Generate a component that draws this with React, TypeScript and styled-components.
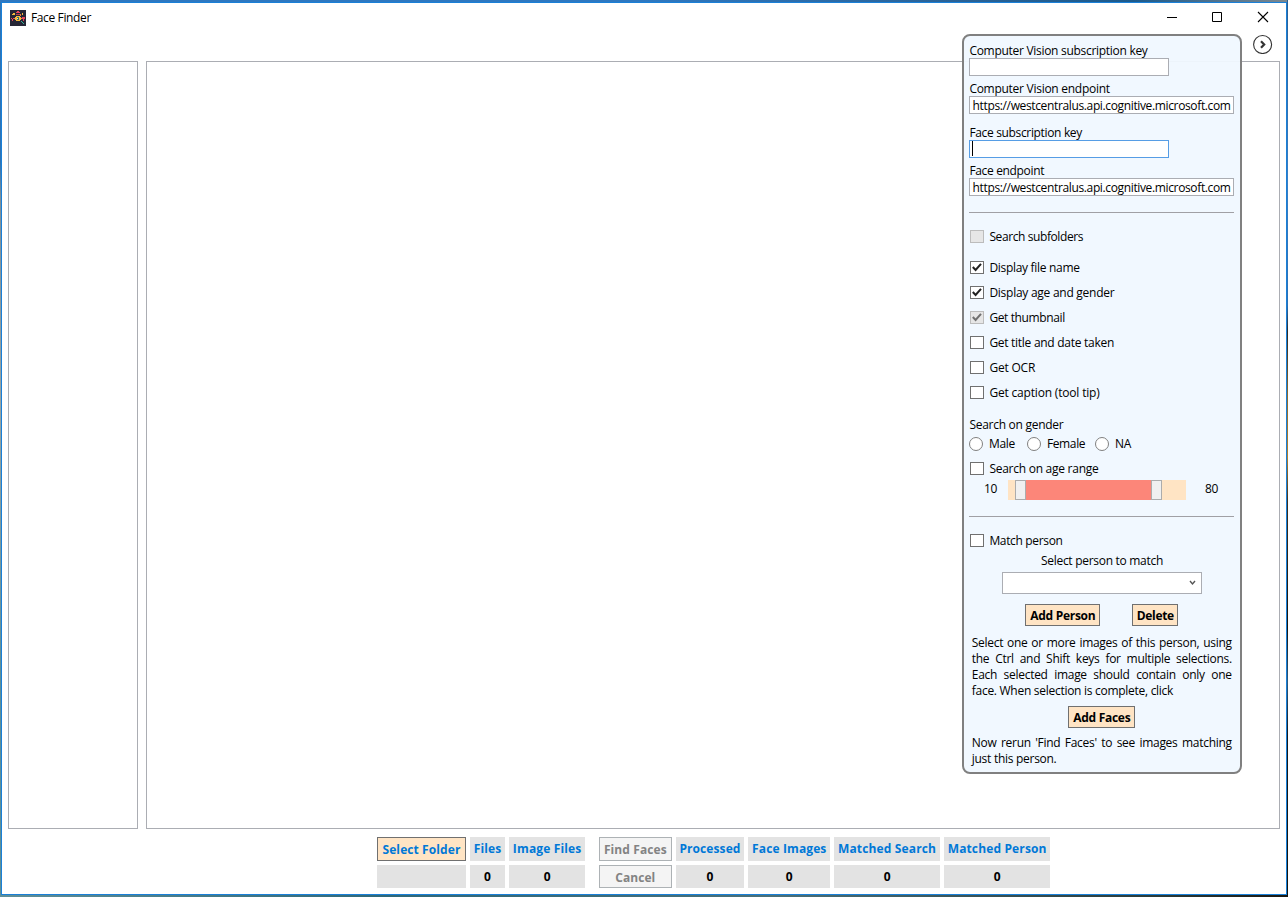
import React from 'react';
import styled, { createGlobalStyle, css } from 'styled-components';

const GlobalStyle = createGlobalStyle`
  * { box-sizing: border-box; }
  body { margin: 0; overflow: hidden; }
  body, button, input {
    font-family: 'Open Sans', 'Noto Sans', sans-serif;
    font-size: 12px;
    line-height: 16px;
    color: #000;
  }
`;

const Desktop = styled.div`
  width: 1288px;
  height: 897px;
  padding: 2px 1px;
  background:
    linear-gradient(180deg, #2a5f94 0%, #3a7fc4 20%, #2a70b5 34%, #2a2a28 37%, #8a6a30 44%, #b08030 51%, #3a2f20 56%, #16140f 70%, #2a5a80 76%, #14181c 82%, #14140f 100%) right / 1px 100% no-repeat,
    linear-gradient(90deg, #5f8f98 0%, #2f6878 30%, #4a7078 60%, #2a3a38 90%, #1a1812 100%) bottom / 100% 2px no-repeat,
    linear-gradient(90deg, #2f78c0 0%, #2f78c0 50%, #2a6296 74%, #1c5a8c 88%, #7c8890 100%) top / 100% 2px no-repeat,
    linear-gradient(180deg, #2f74b5 0%, #2f74b5 18%, #7f8f98 22%, #9aa5a4 45%, #5f8f98 75%, #5f9098 100%);
`;

const Window = styled.div`
  position: relative;
  display: flex;
  flex-direction: column;
  width: 1286px;
  height: 893px;
  border: 1px solid #1a80d8;
  background: #fff;
`;

const TitleBar = styled.header`
  display: flex;
  align-items: center;
  height: 29px;
  padding: 0 9px 0 8px;
`;

const Title = styled.span<{ $ls?: number }>`
  flex: 1;
  margin-left: 5px;
  letter-spacing: ${(p) => p.$ls ?? 0}px;
`;

const WindowButtons = styled.div`
  display: flex;
  align-items: center;
  gap: 34px;
  margin: -2px 8px 0 0;
`;

const Toolbar = styled.div`
  display: flex;
  justify-content: flex-end;
  height: 29px;
  padding: 2px 13px 0 0;
`;

const Panes = styled.main`
  display: flex;
  gap: 8px;
  height: 768px;
  padding: 0 6px;
`;

const Pane = styled.section<{ $width?: number }>`
  ${(p) => (p.$width ? css`width: ${p.$width}px;` : css`flex: 1;`)}
  border: 1px solid #abadb3;
`;

const StatusGrid = styled.footer`
  display: grid;
  grid-template-columns: 89px 35px 76.3px 5.7px 72.7px 68.6px 82px 105.6px 106.6px;
  grid-template-rows: 24px 23px;
  gap: 4px;
  margin: 8px 0 0 375px;
`;

const StatusCell = styled.div<{ $head?: boolean; $ls?: number; $blank?: boolean }>`
  display: flex;
  justify-content: center;
  padding-top: 4px;
  font-weight: 700;
  white-space: nowrap;
  letter-spacing: ${(p) => p.$ls ?? 0}px;
  color: ${(p) => (p.$head ? '#0078d7' : '#000')};
  background: ${(p) => (p.$blank ? 'transparent' : '#e3e3e3')};
`;

const Button = styled.button<{ $w?: number; $blue?: boolean; $tall?: boolean; $ls?: number }>`
  display: flex;
  justify-content: center;
  width: ${(p) => (p.$w ? `${p.$w}px` : 'auto')};
  height: ${(p) => (p.$tall ? 'auto' : '22px')};
  padding: ${(p) => (p.$tall ? 4 : 3)}px 0 0;
  border: 1px solid #707070;
  border-radius: 0;
  background: #ffe4c4;
  color: ${(p) => (p.$blue ? '#0078d7' : '#000')};
  font-weight: 700;
  white-space: nowrap;
  letter-spacing: ${(p) => p.$ls ?? 0}px;
  &:disabled {
    border-color: #adb2b5;
    background: #f4f4f4;
    color: #838383;
  }
`;

const Settings = styled.aside`
  position: absolute;
  left: 959.6px;
  top: 31px;
  display: flex;
  flex-direction: column;
  width: 280px;
  height: 740px;
  padding: 6px 5px 0 5.4px;
  border: 2px solid #808080;
  border-radius: 8px;
  background: rgba(240, 248, 255, 0.95);
`;

const Field = styled.label<{ $gap?: number }>`
  display: block;
  height: 34px;
  margin-bottom: ${(p) => p.$gap ?? 4}px;
`;

const Caption = styled.span<{ $ls?: number }>`
  display: block;
  height: 16px;
  padding: 1px 0 0 0.4px;
  white-space: nowrap;
  letter-spacing: ${(p) => p.$ls ?? -0.27}px;
`;

const TextBox = styled.div<{ $w: number; $focus?: boolean; $ls?: number }>`
  display: flex;
  width: ${(p) => p.$w}px;
  height: 18px;
  padding: 1px 0 0 2.6px;
  border: 1px solid ${(p) => (p.$focus ? '#569de5' : '#abadb3')};
  background: #fff;
  white-space: nowrap;
  letter-spacing: ${(p) => p.$ls ?? 0}px;
`;

const Caret = styled.i`
  width: 1px;
  height: 15px;
  margin: -1px 0 0 -1px;
  background: #000;
`;

const Divider = styled.hr<{ $top: number; $bottom: number }>`
  width: 265px;
  height: 1px;
  margin: ${(p) => p.$top}px 0 ${(p) => p.$bottom}px;
  border: 0;
  background: #a0a0a5;
`;

const CheckRow = styled.label<{ $gap?: number }>`
  display: flex;
  height: 16px;
  margin-bottom: ${(p) => p.$gap ?? 9}px;
  padding-left: 1px;
`;

const Box = styled.span<{ $disabled?: boolean }>`
  display: flex;
  width: 14px;
  height: 13px;
  margin: 2px 5px 0 0;
  border: 1px solid ${(p) => (p.$disabled ? '#bcbcbc' : '#707070')};
  background: ${(p) => (p.$disabled ? '#e6e6e6' : '#fff')};
`;

const RadioRow = styled.div`
  display: flex;
  height: 16px;
  margin: 3px 0 9px;
  padding-left: 1px;
`;

const Radio = styled.label<{ $w: number }>`
  display: flex;
  gap: 5px;
  width: ${(p) => p.$w}px;
  &::before {
    content: '';
    flex: none;
    width: 12px;
    height: 12px;
    margin: 2px 0 0 -0.5px;
    border: 1px solid #808080;
    border-radius: 50%;
    background: #fff;
  }
`;

const AgeRow = styled.div`
  display: flex;
  height: 20px;
  padding-left: 15px;
`;

const AgeValue = styled.span<{ $w: number }>`
  width: ${(p) => p.$w}px;
  padding-top: 1px;
  letter-spacing: -0.4px;
`;

const Track = styled.div`
  display: flex;
  width: 178px;
  height: 20px;
  margin-right: 19px;
  padding-left: 7px;
  background: #ffe4c4;
`;

const Thumb = styled.span`
  width: 11px;
  border: 1px solid #acacac;
  background: #f0f0f0;
`;

const Span = styled.span`
  width: 125px;
  background: #fc8679;
`;

const Centered = styled.div<{ $top?: number; $gap?: number }>`
  display: flex;
  justify-content: center;
  gap: ${(p) => p.$gap ?? 0}px;
  margin-top: ${(p) => p.$top ?? 0}px;
`;

const Select = styled.div`
  display: flex;
  align-items: center;
  justify-content: flex-end;
  width: 200px;
  height: 22px;
  padding-right: 5px;
  border: 1px solid #abadb3;
  background: #fff;
`;

const Help = styled.p<{ $top: number }>`
  width: 260px;
  margin: ${(p) => p.$top}px 0 0 2.8px;
`;

const HelpLine = styled.span<{ $last?: boolean }>`
  display: block;
  height: 16px;
  white-space: nowrap;
  text-align-last: ${(p) => (p.$last ? 'left' : 'justify')};
  letter-spacing: -0.28px;
`;

function AppIcon() {
  return (
    <svg width="16" height="16" viewBox="0 0 16 16" shapeRendering="crispEdges">
      <path fill="#262636" d="M0 0h16v16H0z" />
      <path fill="#e8455c" d="M6 2h4v1H6zM7 1h2v1H7zM1 8h1v1H1zM3 8h1v1H3zM2 9h1v2H2zM12 7h3v2h-1v2h-1V9h-1z" />
      <path fill="#f6b93b" d="M2 4h1V3h2v2H2zM5 7h1V6h4v1h1v3h-1v1H6v-1H5zM12 3h1v2h-1z" />
      <path fill="#ef7d3c" d="M10 4h1v2h-1zM4 8h1v1H4zM11 8h1v1h-1z" />
      <path fill="#b8404f" d="M6 4h4v1H6z" />
      <path fill="#2f6f75" d="M7 7h2v3H7z" />
      <path fill="#f7e6a0" d="M7 8h1v1H7z" />
      <path fill="#38b59a" d="M11 11h1v1h-1zM12 12h1v1h-1zM13 13h1v1h-1z" />
    </svg>
  );
}

function CheckBox({ text, checked, disabled, ls = -0.26, gap }: {
  text: string; checked?: boolean; disabled?: boolean; ls?: number; gap?: number;
}) {
  return (
    <CheckRow $gap={gap}>
      <Box $disabled={disabled}>
        {checked && (
          <svg width="12" height="11" viewBox="0 0 12 11">
            <path d="M1.8 5 4.6 8 10 1.8" fill="none" stroke={disabled ? '#707070' : '#212121'} strokeWidth="2" />
          </svg>
        )}
      </Box>
      <Caption $ls={ls}>{text}</Caption>
    </CheckRow>
  );
}

export default function App() {
  return (
    <Desktop>
      <GlobalStyle />
      <Window>
        <TitleBar>
          <AppIcon />
          <Title $ls={-0.37}>Face Finder</Title>
          <WindowButtons>
            <svg width="12" height="12" viewBox="0 0 12 12"><path d="M2 6.5h10" stroke="#000" /></svg>
            <svg width="12" height="12" viewBox="0 0 12 12"><path d="M1.5 1.5h9v9h-9z" fill="none" stroke="#000" /></svg>
            <svg width="12" height="12" viewBox="0 0 12 12"><path d="m1 1 10 10M11 1 1 11" stroke="#000" strokeWidth="1.1" /></svg>
          </WindowButtons>
        </TitleBar>
        <Toolbar>
          <svg width="20" height="20" viewBox="0 0 20 20">
            <circle cx="9.6" cy="10.5" r="9" fill="#fff" stroke="#333" strokeWidth="1.1" />
            <path d="m8 7.2 3.2 3.3L8 13.8" fill="none" stroke="#333" strokeWidth="2.2" />
          </svg>
        </Toolbar>
        <Panes>
          <Pane $width={130} />
          <Pane />
        </Panes>
        <StatusGrid>
          <Button $blue $tall $ls={0.1}>Select Folder</Button>
          <StatusCell $head $ls={0.1}>Files</StatusCell>
          <StatusCell $head $ls={0.15}>Image Files</StatusCell>
          <StatusCell $blank />
          <Button $tall disabled $ls={0.1}>Find Faces</Button>
          <StatusCell $head $ls={0.1}>Processed</StatusCell>
          <StatusCell $head $ls={0.12}>Face Images</StatusCell>
          <StatusCell $head $ls={0.14}>Matched Search</StatusCell>
          <StatusCell $head $ls={0.14}>Matched Person</StatusCell>
          <StatusCell />
          <StatusCell>0</StatusCell>
          <StatusCell>0</StatusCell>
          <StatusCell $blank />
          <Button $tall disabled $ls={0.05}>Cancel</Button>
          <StatusCell>0</StatusCell>
          <StatusCell>0</StatusCell>
          <StatusCell>0</StatusCell>
          <StatusCell>0</StatusCell>
        </StatusGrid>
        <Settings>
          <Field>
            <Caption $ls={-0.29}>Computer Vision subscription key</Caption>
            <TextBox $w={200} />
          </Field>
          <Field $gap={10}>
            <Caption>Computer Vision endpoint</Caption>
            <TextBox $w={265} $ls={-0.36}>https://westcentralus.api.cognitive.microsoft.com</TextBox>
          </Field>
          <Field>
            <Caption $ls={-0.34}>Face subscription key</Caption>
            <TextBox $w={200} $focus><Caret /></TextBox>
          </Field>
          <Field $gap={0}>
            <Caption $ls={-0.34}>Face endpoint</Caption>
            <TextBox $w={265} $ls={-0.36}>https://westcentralus.api.cognitive.microsoft.com</TextBox>
          </Field>
          <Divider $top={16} $bottom={15} />
          <CheckBox text="Search subfolders" disabled gap={15} ls={-0.4} />
          <CheckBox text="Display file name" checked ls={-0.3} />
          <CheckBox text="Display age and gender" checked />
          <CheckBox text="Get thumbnail" checked disabled ls={-0.38} />
          <CheckBox text="Get title and date taken" ls={-0.28} />
          <CheckBox text="Get OCR" ls={-0.2} />
          <CheckBox text="Get caption (tool tip)" gap={16} ls={-0.18} />
          <Caption>Search on gender</Caption>
          <RadioRow>
            <Radio $w={58}><Caption>Male</Caption></Radio>
            <Radio $w={68}><Caption $ls={-0.35}>Female</Caption></Radio>
            <Radio $w={50}><Caption>NA</Caption></Radio>
          </RadioRow>
          <CheckBox text="Search on age range" gap={4} />
          <AgeRow>
            <AgeValue $w={24}>10</AgeValue>
            <Track><Thumb /><Span /><Thumb /></Track>
            <AgeValue $w={16}>80</AgeValue>
          </AgeRow>
          <Divider $top={16} $bottom={15} />
          <CheckBox text="Match person" gap={4} ls={-0.34} />
          <Centered><Caption $ls={-0.29}>Select person to match</Caption></Centered>
          <Centered $top={4}>
            <Select>
              <svg width="7" height="6" viewBox="0 0 7 6"><path d="m1 1 2.5 3L6 1" fill="none" stroke="#555" strokeWidth="1.4" /></svg>
            </Select>
          </Centered>
          <Centered $top={10} $gap={32}>
            <Button $w={75} $ls={-0.28}>Add Person</Button>
            <Button $w={46} $ls={-0.35}>Delete</Button>
          </Centered>
          <Help $top={9}>
            <HelpLine>Select one or more images of this person, using</HelpLine>
            <HelpLine>the Ctrl and Shift keys for multiple selections.</HelpLine>
            <HelpLine>Each selected image should contain only one</HelpLine>
            <HelpLine $last>face. When selection is complete, click</HelpLine>
          </Help>
          <Centered $top={7}><Button $w={67} $ls={-0.28}>Add Faces</Button></Centered>
          <Help $top={7}>
            <HelpLine>Now rerun 'Find Faces' to see images matching</HelpLine>
            <HelpLine $last>just this person.</HelpLine>
          </Help>
        </Settings>
      </Window>
    </Desktop>
  );
}
